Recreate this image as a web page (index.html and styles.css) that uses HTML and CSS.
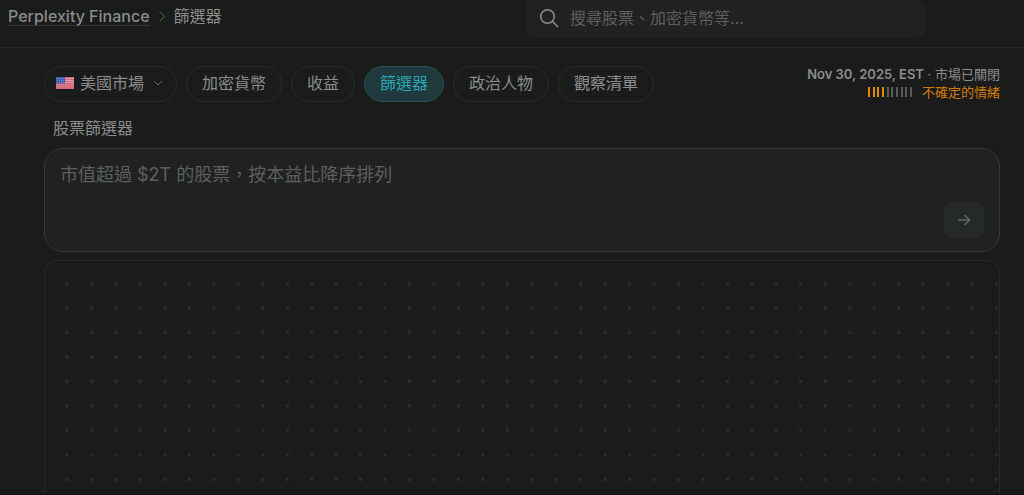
FILE: index.html
```html
<!DOCTYPE html>
<html lang="zh-Hant">
<head>
  <meta charset="UTF-8">
  <meta name="viewport" content="width=device-width, initial-scale=1">
  <title>篩選器 - Perplexity Finance</title>
  <link rel="stylesheet" href="styles.css">
</head>
<body>
  <header class="topbar">
    <nav class="breadcrumb">
      <a href="#">Perplexity Finance</a>
      <svg width="8" height="12" viewBox="0 0 8 12"><path d="M1.500 1.500 6.500 6.500l-5 5"/></svg>
      <span>篩選器</span>
    </nav>
    <label class="search">
      <svg width="20" height="20" viewBox="0 0 20 20"><circle cx="8.500" cy="8.500" r="6.800"/><path d="m13.500 13.500 5.500 5.500"/></svg>
      <input type="text" placeholder="搜尋股票、加密貨幣等..." aria-label="搜尋">
    </label>
  </header>

  <main class="content">
    <div class="toolbar">
      <nav class="tabs">
        <button class="tab market">
          <svg class="flag" width="18" height="12" viewBox="0 0 18 12">
            <rect width="18" height="12" fill="#d9687d"/>
            <path d="M0 1.500h18M0 3.500h18M0 5.500h18" stroke="#d8aab4" stroke-width=".8"/>
            <path d="M0 7.500h18M0 9.500h18" stroke="#dc8797" stroke-width=".6"/>
            <rect width="9" height="6.500" fill="#3e5fae"/>
            <path d="M1 1.500h7M1 3.500h7M1 5.200h7" stroke="#8499cc" stroke-width=".7" stroke-dasharray="1 1"/>
          </svg>
          美國市場
          <svg class="chevron" width="10" height="6" viewBox="0 0 10 6"><path d="m1 1 4 4 4-4"/></svg>
        </button>
        <a class="tab" href="#">加密貨幣</a>
        <a class="tab" href="#">收益</a>
        <a class="tab active" href="#">篩選器</a>
        <a class="tab" href="#">政治人物</a>
        <a class="tab" href="#">觀察清單</a>
      </nav>
      <div class="status">
        <div><strong>Nov 30, 2025, EST</strong> · 市場已關閉</div>
        <div class="mood">
          <span class="meter">
            <i class="on"></i><i class="on"></i><i class="on"></i><i class="on"></i><i></i><i></i><i></i><i></i><i></i><i></i>
          </span>
          不確定的情緒
        </div>
      </div>
    </div>

    <label class="title" for="query">股票篩選器</label>
    <form class="query-box">
      <textarea id="query" placeholder="市值超過 $2T 的股票，按本益比降序排列"></textarea>
      <button class="send" type="button" aria-label="送出">
        <svg width="14" height="12" viewBox="0 0 14 12"><path d="M1 6h11.500M7.500 1l5 5-5 5"/></svg>
      </button>
    </form>

    <section class="results">
      <svg class="dots" viewBox="0 0 390 100">
        <defs>
          <pattern id="dot" width="10" height="10" patternUnits="userSpaceOnUse">
            <circle cx="9" cy="9.200" r=".75"/>
          </pattern>
        </defs>
        <rect width="390" height="100" fill="url(#dot)"/>
      </svg>
    </section>
  </main>
</body>
</html>
```

FILE: styles.css
```css
* {
  box-sizing: border-box;
}
body {
  margin: 0;
  height: 100vh;
  display: flex;
  flex-direction: column;
  overflow: hidden;
  background: #1a1c1b;
  border-bottom: 2px solid #191516;
  color: #8b8c8b;
  font-family: Inter, "Noto Sans CJK TC", sans-serif;
  font-size: 16px;
  line-height: 24px;
}
a {
  color: inherit;
  text-decoration: none;
}
button, input, textarea {
  font: inherit;
  color: inherit;
}
svg {
  fill: none;
  stroke: currentColor;
  flex-shrink: 0;
}
.topbar {
  display: grid;
  grid-template-columns: 1fr 400px;
  align-items: start;
  padding: 0 99px 10px 8px;
  border-bottom: 1px solid #272928;
}
.breadcrumb {
  display: flex;
  align-items: center;
  gap: 8px;
  padding-top: 4px;
}
.breadcrumb a {
  font-weight: 500;
  line-height: 18px;
  border-bottom: 1px solid #343635;
}
.breadcrumb svg {
  color: #5d5f5e;
}
.search {
  display: flex;
  align-items: center;
  gap: 11px;
  height: 37px;
  padding: 0 14px 2px;
  background: #202221;
  border-radius: 8px;
}
.search svg {
  stroke-width: 1.6;
}
.search input {
  flex: 1;
  min-width: 0;
  padding: 0;
  border: none;
  outline: none;
  background: none;
}
::placeholder {
  color: #5d5f5e;
  opacity: 1;
}
.content {
  flex: 1;
  min-height: 0;
  display: flex;
  flex-direction: column;
  padding: 18px 24px 0 44px;
}
.toolbar {
  display: flex;
  justify-content: space-between;
}
.tabs {
  display: flex;
  gap: 9px;
}
.tab {
  height: 36px;
  padding: 4px 15px;
  border: 1px solid #2b2b2b;
  border-radius: 18px;
  background: none;
  white-space: nowrap;
}
.tab.active {
  background: #20393d;
  border-color: #235056;
  color: #2ba5b5;
}
.market {
  display: flex;
  align-items: center;
  gap: 6px;
  padding: 0 13px 2px 11px;
  cursor: pointer;
}
.flag {
  stroke: none;
}
.chevron {
  margin-left: 3px;
  color: #666;
}
.status {
  margin-top: -1px;
  font-size: 13px;
  line-height: 18px;
  text-align: right;
  white-space: nowrap;
}
.status strong {
  font-weight: 600;
}
.mood {
  display: flex;
  align-items: center;
  justify-content: flex-end;
  gap: 10px;
  color: #d47b0c;
}
.meter {
  display: flex;
  justify-content: space-between;
  width: 44px;
}
.meter i {
  width: 2px;
  height: 10px;
  background: #5a5a5a;
}
.meter .on {
  background: #e08a08;
}
.title {
  padding: 14px 9px 8px;
}
.query-box {
  display: flex;
  align-items: flex-end;
  height: 104px;
  padding: 13px 15px;
  background: #202221;
  border: 1px solid #373737;
  border-radius: 18px;
}
.query-box textarea {
  flex: 1;
  align-self: stretch;
  padding: 0;
  border: none;
  outline: none;
  resize: none;
  background: none;
  font-size: 18px;
  line-height: 26px;
}
.send {
  display: grid;
  place-items: center;
  width: 40px;
  height: 36px;
  padding: 0;
  border: none;
  border-radius: 8px;
  background: #25292a;
  color: #636666;
}
.send svg {
  stroke-width: 1.5;
}
.results {
  flex: 1;
  min-height: 0;
  margin-top: 8px;
  overflow: hidden;
  border: 1px solid #272928;
  border-bottom: none;
  border-radius: 14px 14px 0 0;
}
.dots {
  display: block;
  width: 100%;
  stroke: none;
}
.dots circle {
  fill: #2b2d2c;
}
```
